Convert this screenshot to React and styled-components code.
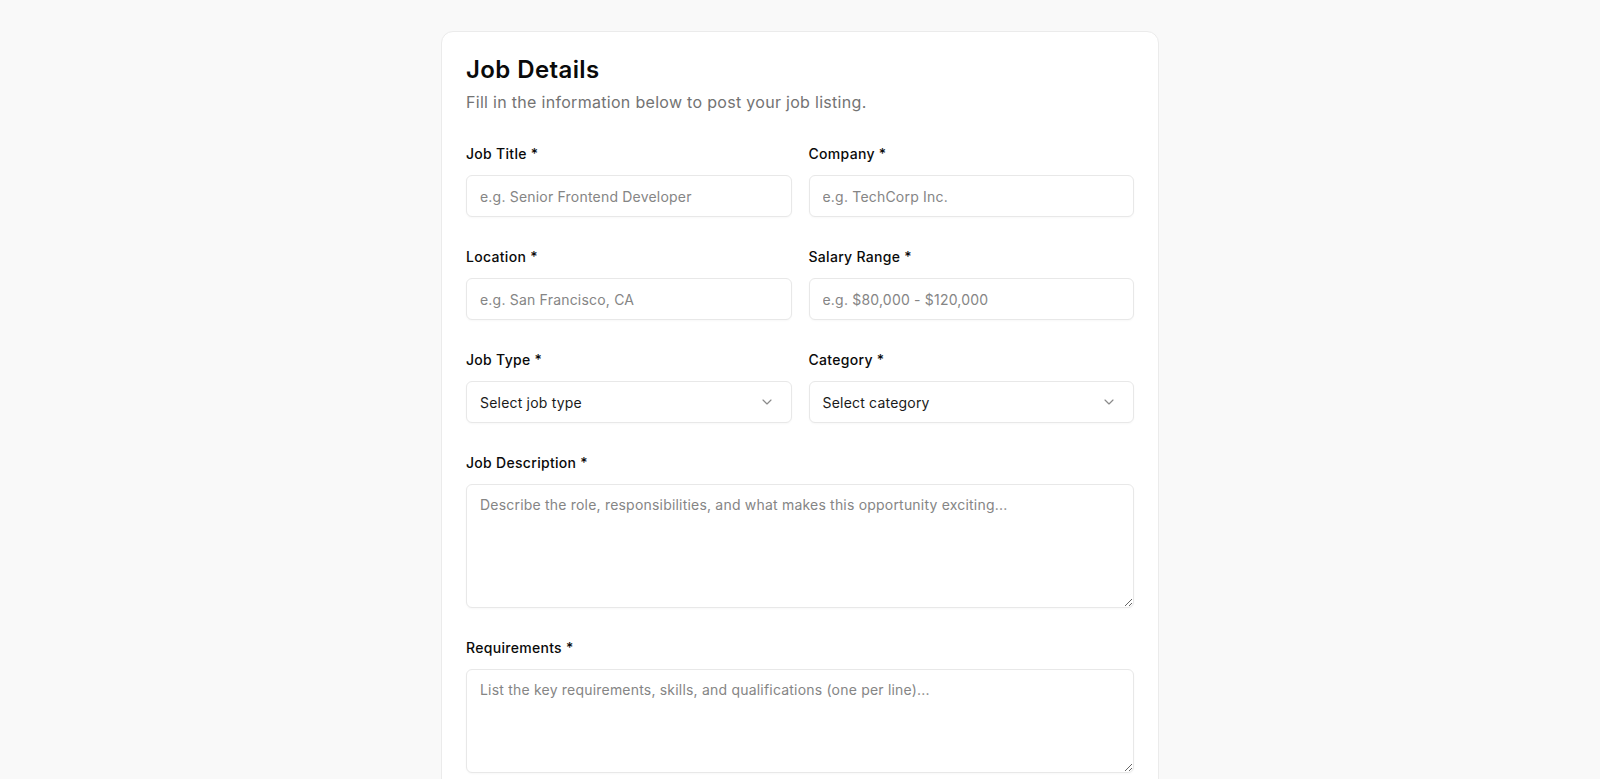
import React from 'react'
import styled, { createGlobalStyle } from 'styled-components'
import { ChevronDown } from 'lucide-react'

const GlobalStyle = createGlobalStyle`
    html, body {
        margin: 0;
        padding: 0;
        background: #f9f9f9;
        font-family: Inter, "Noto Sans", "Liberation Sans", sans-serif;
        color: #0a0a0a;
    }
    * {
        box-sizing: border-box;
    }
`

function App() {
    return (
        <Page>
            <GlobalStyle />
            <Card>
                <Title>Job Details</Title>
                <Subtitle>Fill in the information below to post your job listing.</Subtitle>
                <Form>
                    <Row>
                        <Field>
                            <Label>Job Title *</Label>
                            <Input placeholder="e.g. Senior Frontend Developer" />
                        </Field>
                        <Field>
                            <Label>Company *</Label>
                            <Input placeholder="e.g. TechCorp Inc." />
                        </Field>
                    </Row>
                    <Row>
                        <Field>
                            <Label>Location *</Label>
                            <Input placeholder="e.g. San Francisco, CA" />
                        </Field>
                        <Field>
                            <Label>Salary Range *</Label>
                            <Input placeholder="e.g. $80,000 - $120,000" />
                        </Field>
                    </Row>
                    <Row>
                        <Field>
                            <Label>Job Type *</Label>
                            <Select>
                                <span>Select job type</span>
                                <ChevronDown size={16} strokeWidth={1.75} />
                            </Select>
                        </Field>
                        <Field>
                            <Label>Category *</Label>
                            <Select>
                                <span>Select category</span>
                                <ChevronDown size={16} strokeWidth={1.75} />
                            </Select>
                        </Field>
                    </Row>
                    <Field>
                        <Label>Job Description *</Label>
                        <TextArea
                            $height={124}
                            placeholder="Describe the role, responsibilities, and what makes this opportunity exciting..."
                        />
                    </Field>
                    <Field>
                        <Label>Requirements *</Label>
                        <TextArea
                            $height={104}
                            placeholder="List the key requirements, skills, and qualifications (one per line)..."
                        />
                    </Field>
                </Form>
            </Card>
        </Page>
    )
}

export default App

const Page = styled.div`
    min-height: 100vh;
    padding: 31px 0 40px;
    display: flex;
    justify-content: center;
`
const Card = styled.div`
    width: 718px;
    background: #fff;
    border: 1px solid #ebebeb;
    border-radius: 12px;
    padding: 24px 24px 32px;
`
const Title = styled.h1`
    margin: 0;
    font-size: 24px;
    line-height: 28px;
    font-weight: 600;
    letter-spacing: 0.4px;
    color: #0a0a0a;
`
const Subtitle = styled.p`
    margin: 6px 0 0;
    font-size: 16px;
    line-height: 24px;
    letter-spacing: 0.3px;
    color: #737373;
`
const Form = styled.div`
    margin-top: 30px;
    display: flex;
    flex-direction: column;
    gap: 30px;
`
const Row = styled.div`
    display: grid;
    grid-template-columns: 1fr 1fr;
    gap: 17px;
`
const Field = styled.div`
    display: flex;
    flex-direction: column;
`
const Label = styled.label`
    font-size: 14px;
    line-height: 20px;
    font-weight: 500;
    letter-spacing: 0.3px;
    color: #0a0a0a;
    margin-bottom: 11px;
`
const Input = styled.input`
    height: 42px;
    padding: 0 13px;
    border: 1px solid #e8e8e8;
    border-radius: 6px;
    background: #fff;
    font-family: inherit;
    font-size: 14px;
    letter-spacing: 0.2px;
    color: #0a0a0a;
    box-shadow: 0 1px 2px rgba(0, 0, 0, 0.03);
    outline: none;
    &::placeholder {
        color: #858585;
    }
`
const Select = styled.button`
    height: 42px;
    padding: 0 16px 0 13px;
    border: 1px solid #e8e8e8;
    border-radius: 6px;
    background: #fff;
    font-family: inherit;
    font-size: 14px;
    letter-spacing: 0.2px;
    color: #1a1a1a;
    display: flex;
    align-items: center;
    justify-content: space-between;
    box-shadow: 0 1px 2px rgba(0, 0, 0, 0.03);
    cursor: pointer;
    svg {
        color: #8a8a8a;
    }
`
const TextArea = styled.textarea`
    height: ${p => p.$height}px;
    padding: 10px 13px;
    border: 1px solid #e8e8e8;
    border-radius: 6px;
    background: #fff;
    font-family: inherit;
    font-size: 14px;
    line-height: 20px;
    letter-spacing: 0.2px;
    color: #0a0a0a;
    resize: vertical;
    box-shadow: 0 1px 2px rgba(0, 0, 0, 0.03);
    outline: none;
    &::placeholder {
        color: #858585;
    }
`
